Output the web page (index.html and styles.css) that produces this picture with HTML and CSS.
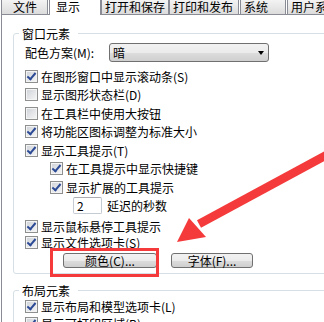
FILE: index.html
```html
<!DOCTYPE html>
<html lang="zh-CN">
<head>
    <meta charset="UTF-8">
    <title>选项 - 显示</title>
    <link rel="stylesheet" href="styles.css">
</head>
<body>
    <div class="window">
        <div class="tabs">
            <div class="tab t1">文件</div>
            <div class="tab t2 active">显示</div>
            <div class="tab t3">打开和保存</div>
            <div class="tab t4">打印和发布</div>
            <div class="tab t5">系统</div>
            <div class="tab t6">用户系统配置</div>
        </div>
        <div class="panel">
            <fieldset class="group g1">
                <legend>窗口元素</legend>
                <div class="row combo-row">
                    <span class="combo-label">配色方案(M):</span>
                    <div class="combo"><span>暗</span><span class="caret"></span></div>
                </div>
                <div class="row h18"><span class="cb on"></span>在图形窗口中显示滚动条(S)</div>
                <div class="row h19"><span class="cb"></span>显示图形状态栏(D)</div>
                <div class="row h18"><span class="cb"></span>在工具栏中使用大按钮</div>
                <div class="row h19"><span class="cb on"></span>将功能区图标调整为标准大小</div>
                <div class="row h18"><span class="cb on"></span>显示工具提示(T)</div>
                <div class="row h19 sub"><span class="cb on"></span>在工具提示中显示快捷键</div>
                <div class="row h18 sub"><span class="cb on"></span>显示扩展的工具提示</div>
                <div class="row h19 delay">
                    <span class="spin">2</span>
                    <span class="delay-label">延迟的秒数</span>
                </div>
                <div class="row h18 gap2"><span class="cb on"></span>显示鼠标悬停工具提示</div>
                <div class="row h15"><span class="cb on"></span>显示文件选项卡(S)</div>
                <div class="buttons">
                    <button class="btn btn-color">颜色(C)...</button>
                    <button class="btn btn-font">字体(F)...</button>
                </div>
            </fieldset>
            <fieldset class="group g2">
                <legend>布局元素</legend>
                <div class="row h16"><span class="cb on"></span>显示布局和模型选项卡(L)</div>
                <div class="row h18"><span class="cb on"></span>显示可打印区域(B)</div>
            </fieldset>
        </div>

        <!-- annotation drawn on top of the screenshot -->
        <svg class="mark" width="324" height="322" viewBox="0 0 324 322">
            <rect x="51.5" y="249.5" width="106" height="26" fill="none" stroke="#f43a3a" stroke-width="3"/>
            <path d="M332 152 L199 224" stroke="#f43a3a" stroke-width="8.5" fill="none"/>
            <polygon points="177,242 189,218 206,237" fill="#f43a3a"/>
        </svg>
    </div>
</body>
</html>
```

FILE: styles.css
```css
body {
    margin: 0;
    padding: 0;
    background: #fff;
    font-family: "Noto Sans CJK SC", "Noto Sans", sans-serif;
    font-size: 12px;
    color: #000;
}
.window {
    position: relative;
    width: 324px;
    height: 322px;
    overflow: hidden;
    background: #fff;
}
.tabs {
    position: relative;
    z-index: 1;
    display: flex;
    align-items: flex-start;
    height: 14px;
}
.tab {
    box-sizing: border-box;
    height: 14px;
    border: 1px solid #898c95;
    border-top: none;
    border-bottom: none;
    background: linear-gradient(#f3f3f3, #dcdcdc);
    line-height: 14px;
    padding-left: 3px;
    white-space: nowrap;
    overflow: hidden;
    flex-shrink: 0;
}
.tab.active {
    height: 15px;
    background: #fff;
}
.t1 { margin-left: 1px; width: 47px; padding-left: 11px; }
.t2 { margin-left: 1px; width: 52px; padding-left: 6px; }
.t3 { width: 68px; }
.t4 { width: 70px; }
.t5 { margin-left: 1px; width: 46px; }
.t6 { margin-left: 1px; width: 70px; }
.panel {
    margin-left: 1px;
    border-top: 1px solid #898c95;
    border-left: 1px solid #898c95;
    padding-left: 11px;
    height: 320px;
}
.group {
    width: 380px;
    margin: 0;
    padding: 2px 0 5px 11px;
    border: 1px solid #d5dfe5;
    border-radius: 3px;
    min-width: 0;
}
.group legend {
    margin-left: -6px;
    padding: 0 8px 0 3px;
    height: 15px;
    line-height: 15px;
}
.g1 { margin-top: 11px; }
.g2 { margin-top: 9px; padding-top: 0; }
.row {
    display: flex;
    align-items: center;
    white-space: nowrap;
}
.h15 { height: 15px; }
.h16 { height: 16px; }
.h18 { height: 18px; }
.h19 { height: 19px; }
.gap2 { margin-top: 2px; }
.sub { padding-left: 25px; }
.combo-row {
    height: 19px;
    margin-bottom: 5px;
}
.combo-label {
    width: 84px;
}
.combo {
    box-sizing: border-box;
    width: 160px;
    height: 19px;
    border: 1px solid #707070;
    border-radius: 3px;
    background: linear-gradient(#f2f2f2 0%, #ebebeb 50%, #dddddd 51%, #cfcfcf 100%);
    display: flex;
    align-items: center;
    padding-left: 3px;
}
.caret {
    margin-left: auto;
    margin-right: 4px;
    width: 0;
    height: 0;
    border-left: 3px solid transparent;
    border-right: 3px solid transparent;
    border-top: 4px solid #000;
}
.cb {
    box-sizing: border-box;
    width: 13px;
    height: 13px;
    margin-right: 3px;
    border: 1px solid #8e8f8f;
    background: linear-gradient(135deg, #cdd1d7, #f7f7f7);
    box-shadow: inset 0 0 0 1px #f4f4f4;
    flex-shrink: 0;
    position: relative;
}
.cb.on::after {
    content: "";
    position: absolute;
    left: 3px;
    top: 0px;
    width: 3px;
    height: 7px;
    border-right: 2px solid #2c4a95;
    border-bottom: 2px solid #2c4a95;
    transform: rotate(40deg);
}
.delay {
    padding-left: 48px;
}
.spin {
    box-sizing: border-box;
    width: 29px;
    height: 17px;
    border: 1px solid #c5cbd3;
    border-top-color: #abadb3;
    border-radius: 2px;
    padding-left: 3px;
    line-height: 15px;
}
.delay-label {
    margin-left: 5px;
}
.buttons {
    display: flex;
    margin-top: 3px;
    padding-left: 38px;
}
.btn {
    box-sizing: border-box;
    height: 15px;
    padding: 0;
    border: 1px solid #707070;
    border-radius: 3px;
    background: linear-gradient(#f2f2f2 0%, #ebebeb 50%, #dddddd 51%, #cfcfcf 100%);
    font-family: inherit;
    font-size: 12px;
    line-height: 13px;
    color: #000;
}
.btn-color { width: 94px; }
.btn-font { width: 82px; margin-left: 14px; }
.mark {
    position: absolute;
    top: 0;
    left: 0;
    pointer-events: none;
}
```
